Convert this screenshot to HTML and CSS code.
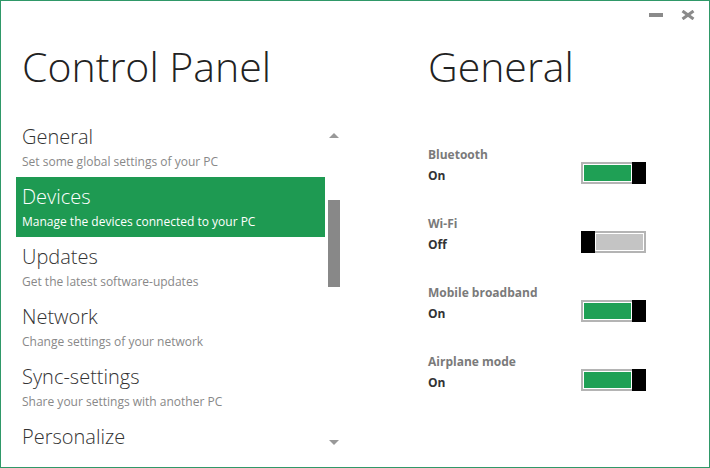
FILE: index.html
```html
<!DOCTYPE html>
<html>
<head>
<meta charset="utf-8">
<link rel="stylesheet" href="styles.css">
</head>
<body>
<div class="window">
  <div class="titlebar">
    <span class="min"></span>
    <svg class="close" width="14" height="10" viewBox="0 0 14 10"><path d="M1.5 1 L12.5 9 M12.5 1 L1.5 9" stroke="#8a8a8a" stroke-width="3"/></svg>
  </div>
  <div class="main">
    <div class="left">
      <h1 class="title">Control Panel</h1>
      <div class="nav">
        <ul class="list">
          <li class="item"><div class="item-title">General</div><div class="item-sub">Set some global settings of your PC</div></li>
          <li class="item selected"><div class="item-title">Devices</div><div class="item-sub">Manage the devices connected to your PC</div></li>
          <li class="item"><div class="item-title">Updates</div><div class="item-sub">Get the latest software-updates</div></li>
          <li class="item"><div class="item-title">Network</div><div class="item-sub">Change settings of your network</div></li>
          <li class="item"><div class="item-title">Sync-settings</div><div class="item-sub">Share your settings with another PC</div></li>
          <li class="item"><div class="item-title">Personalize</div></li>
        </ul>
        <div class="scrollbar">
          <span class="arrow up"></span>
          <span class="thumb"></span>
          <span class="arrow down"></span>
        </div>
      </div>
    </div>
    <div class="right">
      <h1 class="title">General</h1>
      <div class="settings">
        <div class="row">
          <div class="info"><div class="label">Bluetooth</div><div class="value">On</div></div>
          <div class="toggle on"><span class="track"></span><span class="knob"></span></div>
        </div>
        <div class="row">
          <div class="info"><div class="label">Wi-Fi</div><div class="value">Off</div></div>
          <div class="toggle off"><span class="knob"></span><span class="track"></span></div>
        </div>
        <div class="row">
          <div class="info"><div class="label">Mobile broadband</div><div class="value">On</div></div>
          <div class="toggle on"><span class="track"></span><span class="knob"></span></div>
        </div>
        <div class="row">
          <div class="info"><div class="label">Airplane mode</div><div class="value">On</div></div>
          <div class="toggle on"><span class="track"></span><span class="knob"></span></div>
        </div>
      </div>
    </div>
  </div>
</div>
</body>
</html>
```
FILE: styles.css
```css
* { box-sizing: border-box; }
html, body { margin: 0; padding: 0; }
body {
  width: 710px;
  height: 468px;
  overflow: hidden;
  background: #fff;
  font-family: "Open Sans", "Noto Sans", sans-serif;
  color: #222;
}
.window {
  width: 710px;
  height: 468px;
  border: 1px solid #2f9868;
  display: flex;
  flex-direction: column;
  overflow: hidden;
}
.titlebar {
  height: 28px;
  flex: none;
  display: flex;
  justify-content: flex-end;
  align-items: center;
  gap: 18px;
  padding-right: 14px;
}
.min {
  width: 14px;
  height: 4px;
  background: #8a8a8a;
}
.close { display: block; }
.main {
  flex: 1;
  display: flex;
  min-height: 0;
}
.left {
  width: 339px;
  flex: none;
  padding-left: 15px;
  display: flex;
  flex-direction: column;
}
.title {
  margin: 17px 0 0 6px;
  font-size: 41px;
  line-height: 41px;
  font-weight: 300;
  color: #222;
  white-space: nowrap;
}
.nav {
  margin-top: 30px;
  display: flex;
  gap: 3px;
  align-items: flex-start;
}
.list {
  list-style: none;
  margin: 0;
  padding: 0;
  width: 309px;
}
.item {
  height: 60px;
  padding: 8px 0 0 6px;
}
.item-title {
  font-size: 20px;
  line-height: 24px;
  font-weight: 300;
  color: #333;
}
.item-sub {
  margin-top: 5px;
  font-size: 12px;
  line-height: 16px;
  color: #888;
}
.item.selected { background: #1e9a52; }
.item.selected .item-title,
.item.selected .item-sub { color: #fff; }
.scrollbar {
  width: 12px;
  display: flex;
  flex-direction: column;
  align-items: center;
}
.arrow {
  width: 0;
  height: 0;
  border-left: 5px solid transparent;
  border-right: 5px solid transparent;
}
.arrow.up {
  margin-top: 16px;
  border-bottom: 5px solid #999;
}
.thumb {
  margin-top: 62px;
  width: 12px;
  height: 87px;
  background: #888;
}
.arrow.down {
  margin-top: 153px;
  border-top: 5px solid #999;
}
.right {
  flex: 1;
  padding-left: 88px;
}
.right .title { margin-left: 0; }
.settings {
  margin-top: 57px;
  width: 218px;
  display: flex;
  flex-direction: column;
  gap: 27px;
}
.row {
  display: flex;
  justify-content: space-between;
  align-items: flex-start;
}
.label, .value {
  font-size: 12px;
  line-height: 21px;
  font-weight: 700;
}
.label { color: #7a7a7a; }
.value { color: #333; }
.toggle {
  margin-top: 18px;
  width: 65px;
  height: 22px;
  display: flex;
}
.track {
  flex: 1;
  border: 2px solid #b4b4b4;
  box-shadow: inset 0 0 0 1px #fff;
}
.toggle.on .track { background: #1fa055; border-right: 0; }
.toggle.off .track { background: #c4c4c4; border-left: 0; }
.knob {
  width: 14px;
  background: #000;
}
```
